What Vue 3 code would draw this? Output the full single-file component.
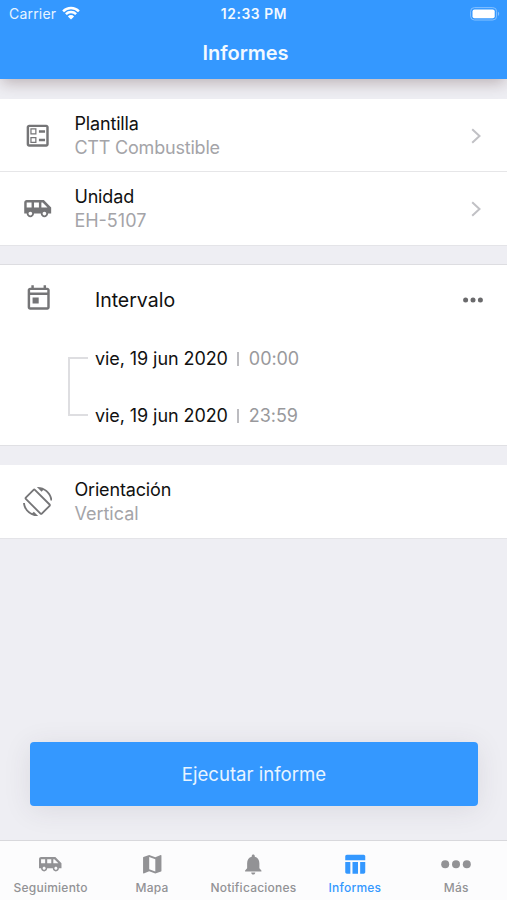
<script setup>
const van = 'M17 5H3c-1.1 0-2 .89-2 2v9h2c0 1.65 1.34 3 3 3s3-1.35 3-3h5.5c0 1.65 1.34 3 3 3s3-1.35 3-3H23v-5l-6-6zM3 11V7h4v4H3zm3 6.5c-.83 0-1.5-.67-1.5-1.5s.67-1.5 1.5-1.5 1.5.67 1.5 1.5-.67 1.5-1.5 1.5zm7-6.5H9V7h4v4zm4.5 6.5c-.83 0-1.5-.67-1.5-1.5s.67-1.5 1.5-1.5 1.5.67 1.5 1.5-.67 1.5-1.5 1.5zM15 11V7h1l4 4h-5z'
const ballot = 'M13 7.5h5v2h-5zM13 14.5h5v2h-5zM19 3H5c-1.1 0-2 .9-2 2v14c0 1.1.9 2 2 2h14c1.1 0 2-.9 2-2V5c0-1.1-.9-2-2-2zm0 16H5V5h14v14zM11 6H6v5h5V6zm-1 4H7V7h3v3zm1 3H6v5h5v-5zm-1 4H7v-3h3v3z'
const today = 'M19 3h-1V1h-2v2H8V1H6v2H5c-1.11 0-1.99.9-1.99 2L3 19c0 1.1.89 2 2 2h14c1.1 0 2-.9 2-2V5c0-1.1-.9-2-2-2zm0 16H5V9h14v10zM5 7V5h14v2H5zM7 11h5v5H7z'
const rotation = 'M16.48 2.52c3.27 1.55 5.61 4.72 5.97 8.48h1.5C23.44 4.84 18.29 0 12 0l-.66.03 3.81 3.81 1.33-1.32zm-6.25-.77c-.59-.59-1.54-.59-2.12 0L1.75 8.11c-.59.59-.59 1.54 0 2.12l12.02 12.02c.59.59 1.54.59 2.12 0l6.36-6.36c.59-.59.59-1.54 0-2.12L10.23 1.75zm4.6 19.44L2.81 9.17l6.36-6.36 12.02 12.02-6.36 6.36zm-7.31.29C4.25 19.94 1.91 16.76 1.55 13H.05C.56 19.16 5.71 24 12 24l.66-.03-3.81-3.81-1.33 1.32z'
const map = 'M20.5 3l-.16.03L15 5.1 9 3 3.36 4.9c-.21.07-.36.25-.36.48V20.5c0 .28.22.5.5.5l.16-.03L9 18.9l6 2.1 5.64-1.9c.21-.07.36-.25.36-.48V3.5c0-.28-.22-.5-.5-.5zM15 19l-6-2.11V5l6 2.11V19z'
const bell = 'M12 22c1.1 0 2-.9 2-2h-4c0 1.1.89 2 2 2zm6-6v-5c0-3.07-1.64-5.64-4.5-6.32V4c0-.83-.67-1.5-1.5-1.5s-1.5.67-1.5 1.5v.68C7.63 5.36 6 7.92 6 11v5l-2 2v1h16v-1l-2-2z'
const table = 'M2.2 8V4.2c0-.9.7-1.6 1.6-1.6h16.4c.9 0 1.6.7 1.6 1.6V8zM2.2 9.8h5V21.2H3.8c-.9 0-1.6-.7-1.6-1.6zM9.3 9.8h5.4v11.4H9.3zM16.8 9.8h5v9.8c0 .9-.7 1.6-1.6 1.6h-3.4z'

const rows = [
  { icon: ballot, title: 'Plantilla', value: 'CTT Combustible', tight: true },
  { icon: van, title: 'Unidad', value: 'EH-5107' },
]
const dates = [
  { day: 'vie, 19 jun 2020', time: '00:00' },
  { day: 'vie, 19 jun 2020', time: '23:59' },
]
const tabs = [
  { icon: van, label: 'Seguimiento' },
  { icon: map, label: 'Mapa' },
  { icon: bell, label: 'Notificaciones' },
  { icon: table, label: 'Informes', active: true },
  { dots: true, label: 'Más' },
]
</script>

<template>
  <div class="screen">
    <header class="header">
      <div class="status">
        <div class="carrier">
          <span>Carrier</span>
          <svg class="wifi" viewBox="0 0 18 14">
            <path d="M1.1 5.3a11.2 11.2 0 0 1 15.8 0M3.9 8.2a7.2 7.2 0 0 1 10.2 0" />
            <path class="wifi-dot" d="M9 13.6 5.9 10.4a4.4 4.4 0 0 1 6.2 0z" />
          </svg>
        </div>
        <span class="clock">12:33 PM</span>
        <div class="power">
          <svg class="battery" viewBox="0 0 30 14">
            <rect class="shell" x=".6" y=".6" width="26" height="12.4" rx="3.8" />
            <rect class="charge" x="2.5" y="2.4" width="22.2" height="8.8" rx="2" />
            <path class="cap" d="M28 4.7c1.6.6 1.6 3.6 0 4.2z" />
          </svg>
        </div>
      </div>
      <h1 class="title">Informes</h1>
    </header>

    <section class="card">
      <div v-for="row in rows" :key="row.title" class="row">
        <svg class="icon" viewBox="0 0 24 24"><path :d="row.icon" /></svg>
        <div class="texts">
          <span class="label">{{ row.title }}</span>
          <span class="value" :class="{ tight: row.tight }">{{ row.value }}</span>
        </div>
        <svg class="chevron" viewBox="0 0 10 16"><path d="M1.2 1.2 8.5 8l-7.3 6.8" /></svg>
      </div>
    </section>

    <section class="card interval">
      <div class="interval-head">
        <svg class="icon" viewBox="0 0 24 24"><path :d="today" /></svg>
        <span class="interval-title">Intervalo</span>
        <svg class="more" viewBox="0 0 20 6">
          <circle cx="2.6" cy="3" r="2.5" /><circle cx="10" cy="3" r="2.5" /><circle cx="17.4" cy="3" r="2.5" />
        </svg>
      </div>
      <div class="range">
        <div class="bracket"></div>
        <div class="dates">
          <div v-for="d in dates" :key="d.time" class="date">
            <span class="day">{{ d.day }}</span>
            <span class="bar"></span>
            <span class="time">{{ d.time }}</span>
          </div>
        </div>
      </div>
    </section>

    <section class="card orientation">
      <div class="row">
        <svg class="icon" viewBox="0 0 24 24"><path :d="rotation" /></svg>
        <div class="texts">
          <span class="label">Orientación</span>
          <span class="value">Vertical</span>
        </div>
      </div>
    </section>

    <div class="spacer"></div>
    <button class="run">Ejecutar informe</button>

    <nav class="tabs">
      <div v-for="tab in tabs" :key="tab.label" class="tab" :class="{ active: tab.active }">
        <svg v-if="tab.dots" class="dots" viewBox="0 0 30 24">
          <circle cx="4.2" cy="12" r="4" /><circle cx="15" cy="12" r="4" /><circle cx="25.8" cy="12" r="4" />
        </svg>
        <svg v-else class="tab-icon" viewBox="0 0 24 24"><path :d="tab.icon" /></svg>
        <span>{{ tab.label }}</span>
      </div>
    </nav>
  </div>
</template>

<style>
body { margin: 0; }
</style>

<style scoped>
.screen {
  display: flex;
  flex-direction: column;
  box-sizing: border-box;
  height: 900px;
  overflow: hidden;
  background: #eeeef3;
  font-family: Inter, "Liberation Sans", sans-serif;
  color: #111;
}
.header {
  flex: none;
  height: 79px;
  background: #3498ff;
  color: #fff;
  box-shadow: 0 6px 14px -2px rgba(60, 25, 25, .28);
}
.status {
  display: grid;
  grid-template-columns: 1fr auto 1fr;
  align-items: center;
  height: 27px;
  padding: 0 7px 0 9px;
}
.carrier { display: flex; align-items: center; gap: 6px; font-size: 14px; letter-spacing: .2px; color: #e8f4ff; }
.wifi { width: 18px; height: 14px; margin-top: -2px; fill: none; stroke: #fff; stroke-width: 2.5; }
.wifi-dot { fill: #fff; stroke: none; }
.clock { font-size: 13.8px; font-weight: 600; letter-spacing: .6px; margin-right: 1px; color: #f2f9ff; }
.power { display: flex; justify-content: flex-end; }
.battery { width: 30px; height: 14px; }
.shell { fill: none; stroke: #84c1ff; stroke-width: 1; }
.charge { fill: #fff; }
.cap { fill: #84c1ff; }
.title { margin: 0; padding-right: 16px; line-height: 52px; text-align: center; font-size: 20px; font-weight: 600; color: #f2f9ff; }
.card { flex: none; background: #fff; }
.header + .card { margin-top: 20px; box-shadow: 0 1px 0 #e4e4e8; position: relative; }
.row { display: flex; align-items: center; box-sizing: border-box; height: 73px; padding: 0 26px 0 23px; }
.header + .card .row:first-child { box-shadow: inset 0 -1px 0 #e6e6e8; }
.icon { flex: none; width: 29.4px; height: 29.4px; fill: #757577; }
.texts { display: flex; flex-direction: column; flex: 1; padding-top: 1px; margin-left: 22px; font-size: 18px; line-height: 24.5px; }
.label { letter-spacing: -.15px; }
.value { color: #a4a4a8; }
.tight { letter-spacing: -.2px; }
.chevron { width: 10px; height: 16px; fill: none; stroke: #c1c1c5; stroke-width: 2; }
.interval { box-sizing: border-box; height: 182px; margin-top: 19px; border-top: 1px solid #dddde1; border-bottom: 1px solid #e0e0e4; }
.interval-head { display: flex; align-items: center; height: 68px; padding: 0 24px; }
.interval-title { flex: 1; margin-left: 41.5px; padding-top: 2px; font-size: 19.5px; }
.more { width: 20px; height: 6px; margin-top: 1px; fill: #6a6a6c; }
.range { display: flex; align-items: center; height: 107px; padding-left: 68px; }
.bracket { box-sizing: border-box; width: 20px; height: 59px; border: 2px solid #dedee1; border-right: 0; }
.dates { display: flex; flex-direction: column; gap: 33px; margin: 1px 0 0 7px; }
.date { display: flex; align-items: center; height: 24px; font-size: 18px; letter-spacing: -.08px; }
.bar { width: 2px; height: 14px; margin: 0 10px 0 9px; background: #bcbcc0; }
.time { color: #99999c; }
.orientation { margin-top: 19px; box-shadow: 0 1px 0 #e4e4e8; }
.spacer { flex: 1; }
.run {
  flex: none;
  height: 64px;
  margin: 0 29px 34px 30px;
  padding: 0;
  border: 0;
  border-radius: 4px;
  background: #3498ff;
  color: #e8f4ff;
  font-family: inherit;
  font-size: 18.6px;
  box-shadow: 0 4px 28px rgba(60, 50, 70, .1);
}
.tabs {
  flex: none;
  display: grid;
  grid-template-columns: repeat(5, 1fr);
  box-sizing: border-box;
  height: 60px;
  border-top: 1px solid #d8d8dc;
  background: #fcfcfd;
  position: relative;
}
.tab { display: flex; flex-direction: column; align-items: center; padding-top: 10.5px; font-size: 12px; font-weight: 500; letter-spacing: .23px; line-height: 15px; color: #929295; }
.tab-icon { width: 24.5px; height: 24.5px; margin-bottom: 4px; fill: currentColor; }
.dots { width: 30px; height: 24.5px; margin-bottom: 4px; fill: currentColor; }
.active { color: #3498ff; }
</style>
